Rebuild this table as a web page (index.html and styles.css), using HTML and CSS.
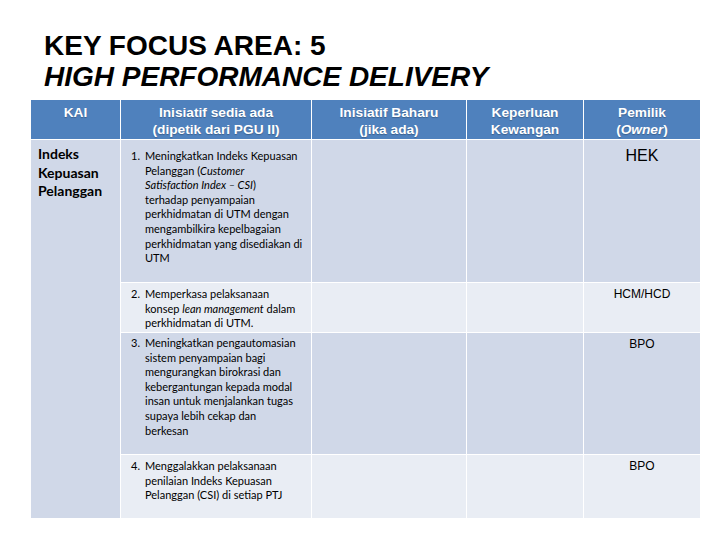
FILE: index.html
```html
<!DOCTYPE html>
<html>
<head>
<meta charset="utf-8">
<link rel="stylesheet" href="styles.css">
</head>
<body>
<div class="slide">
  <h1 class="title">
    <span class="t1">KEY FOCUS AREA: 5</span>
    <span class="t2">HIGH PERFORMANCE DELIVERY</span>
  </h1>
  <div class="grid">
    <div class="hd">KAI</div>
    <div class="hd">Inisiatif sedia ada<br>(dipetik dari PGU II)</div>
    <div class="hd">Inisiatif Baharu<br>(jika ada)</div>
    <div class="hd">Keperluan<br>Kewangan</div>
    <div class="hd">Pemilik<br>(<i>Owner</i>)</div>

    <div class="kai">Indeks<br>Kepuasan<br>Pelanggan</div>

    <div class="c dark item r1"><span class="num">1.</span><span class="txt">Meningkatkan Indeks Kepuasan<br>Pelanggan (<i>Customer</i><br><i>Satisfaction Index – CSI</i>)<br>terhadap penyampaian<br>perkhidmatan di UTM dengan<br>mengambilkira kepelbagaian<br>perkhidmatan yang disediakan di<br>UTM</span></div>
    <div class="c dark"></div>
    <div class="c dark"></div>
    <div class="c dark own big r1">HEK</div>

    <div class="c light item"><span class="num">2.</span><span class="txt">Memperkasa pelaksanaan<br>konsep <i>lean management</i> dalam<br>perkhidmatan di UTM.</span></div>
    <div class="c light"></div>
    <div class="c light"></div>
    <div class="c light own">HCM/HCD</div>

    <div class="c dark item r3"><span class="num">3.</span><span class="txt">Meningkatkan pengautomasian<br>sistem penyampaian bagi<br>mengurangkan birokrasi dan<br>kebergantungan kepada modal<br>insan untuk menjalankan tugas<br>supaya lebih cekap dan<br>berkesan</span></div>
    <div class="c dark"></div>
    <div class="c dark"></div>
    <div class="c dark own">BPO</div>

    <div class="c light item"><span class="num">4.</span><span class="txt">Menggalakkan pelaksanaan<br>penilaian Indeks Kepuasan<br>Pelanggan (CSI) di setiap PTJ</span></div>
    <div class="c light"></div>
    <div class="c light"></div>
    <div class="c light own">BPO</div>
  </div>
</div>
</body>
</html>
```
FILE: styles.css
```css
html, body {
  margin: 0;
  padding: 0;
  background: #ffffff;
}
.slide {
  width: 720px;
  height: 540px;
  padding: 30px 0 0 31px;
  box-sizing: border-box;
}
.title {
  margin: 0 0 8px 13px;
  font-family: "Liberation Sans", Arial, sans-serif;
  font-weight: bold;
  font-size: 28px;
  line-height: 31px;
  color: #000;
  display: flex;
  flex-direction: column;
}
.t2 { font-style: italic; }
.grid {
  display: grid;
  width: 669px;
  grid-template-columns: 89px 190px 154px 116px 116px;
  grid-template-rows: 39px 142px 49px 121px 63px;
  gap: 1px;
  background: #ffffff;
}
.hd {
  background: #4f81bd;
  color: #ffffff;
  font-family: "Liberation Sans", Arial, sans-serif;
  font-weight: bold;
  font-size: 13.7px;
  line-height: 17px;
  text-align: center;
  padding-top: 4px;
  text-shadow: 0 1px 1px rgba(0,0,0,0.25);
}
.kai {
  grid-column: 1;
  grid-row: 2 / span 4;
  background: #d0d8e8;
  font-family: "Lato", sans-serif;
  font-weight: bold;
  font-size: 14px;
  line-height: 18.5px;
  color: #000;
  padding: 5px 0 0 7px;
}
.c { color: #000; }
.dark { background: #d0d8e8; }
.light { background: #e9edf4; }
.item {
  display: flex;
  font-family: "Lato", sans-serif;
  font-size: 11px;
  line-height: 14.6px;
  padding: 4px 0 0 10px;
  white-space: nowrap;
}
.item.r1 { padding-top: 9px; }
.item.r3 { padding-top: 3px; }
.num { width: 14px; flex: none; }
.txt { flex: 1; }
.own {
  text-align: center;
  font-family: "Liberation Sans", Arial, sans-serif;
  font-size: 12px;
  line-height: 14px;
  padding-top: 4px;
}
.own.big {
  font-size: 16px;
  line-height: 18px;
  padding-top: 7px;
}
```
